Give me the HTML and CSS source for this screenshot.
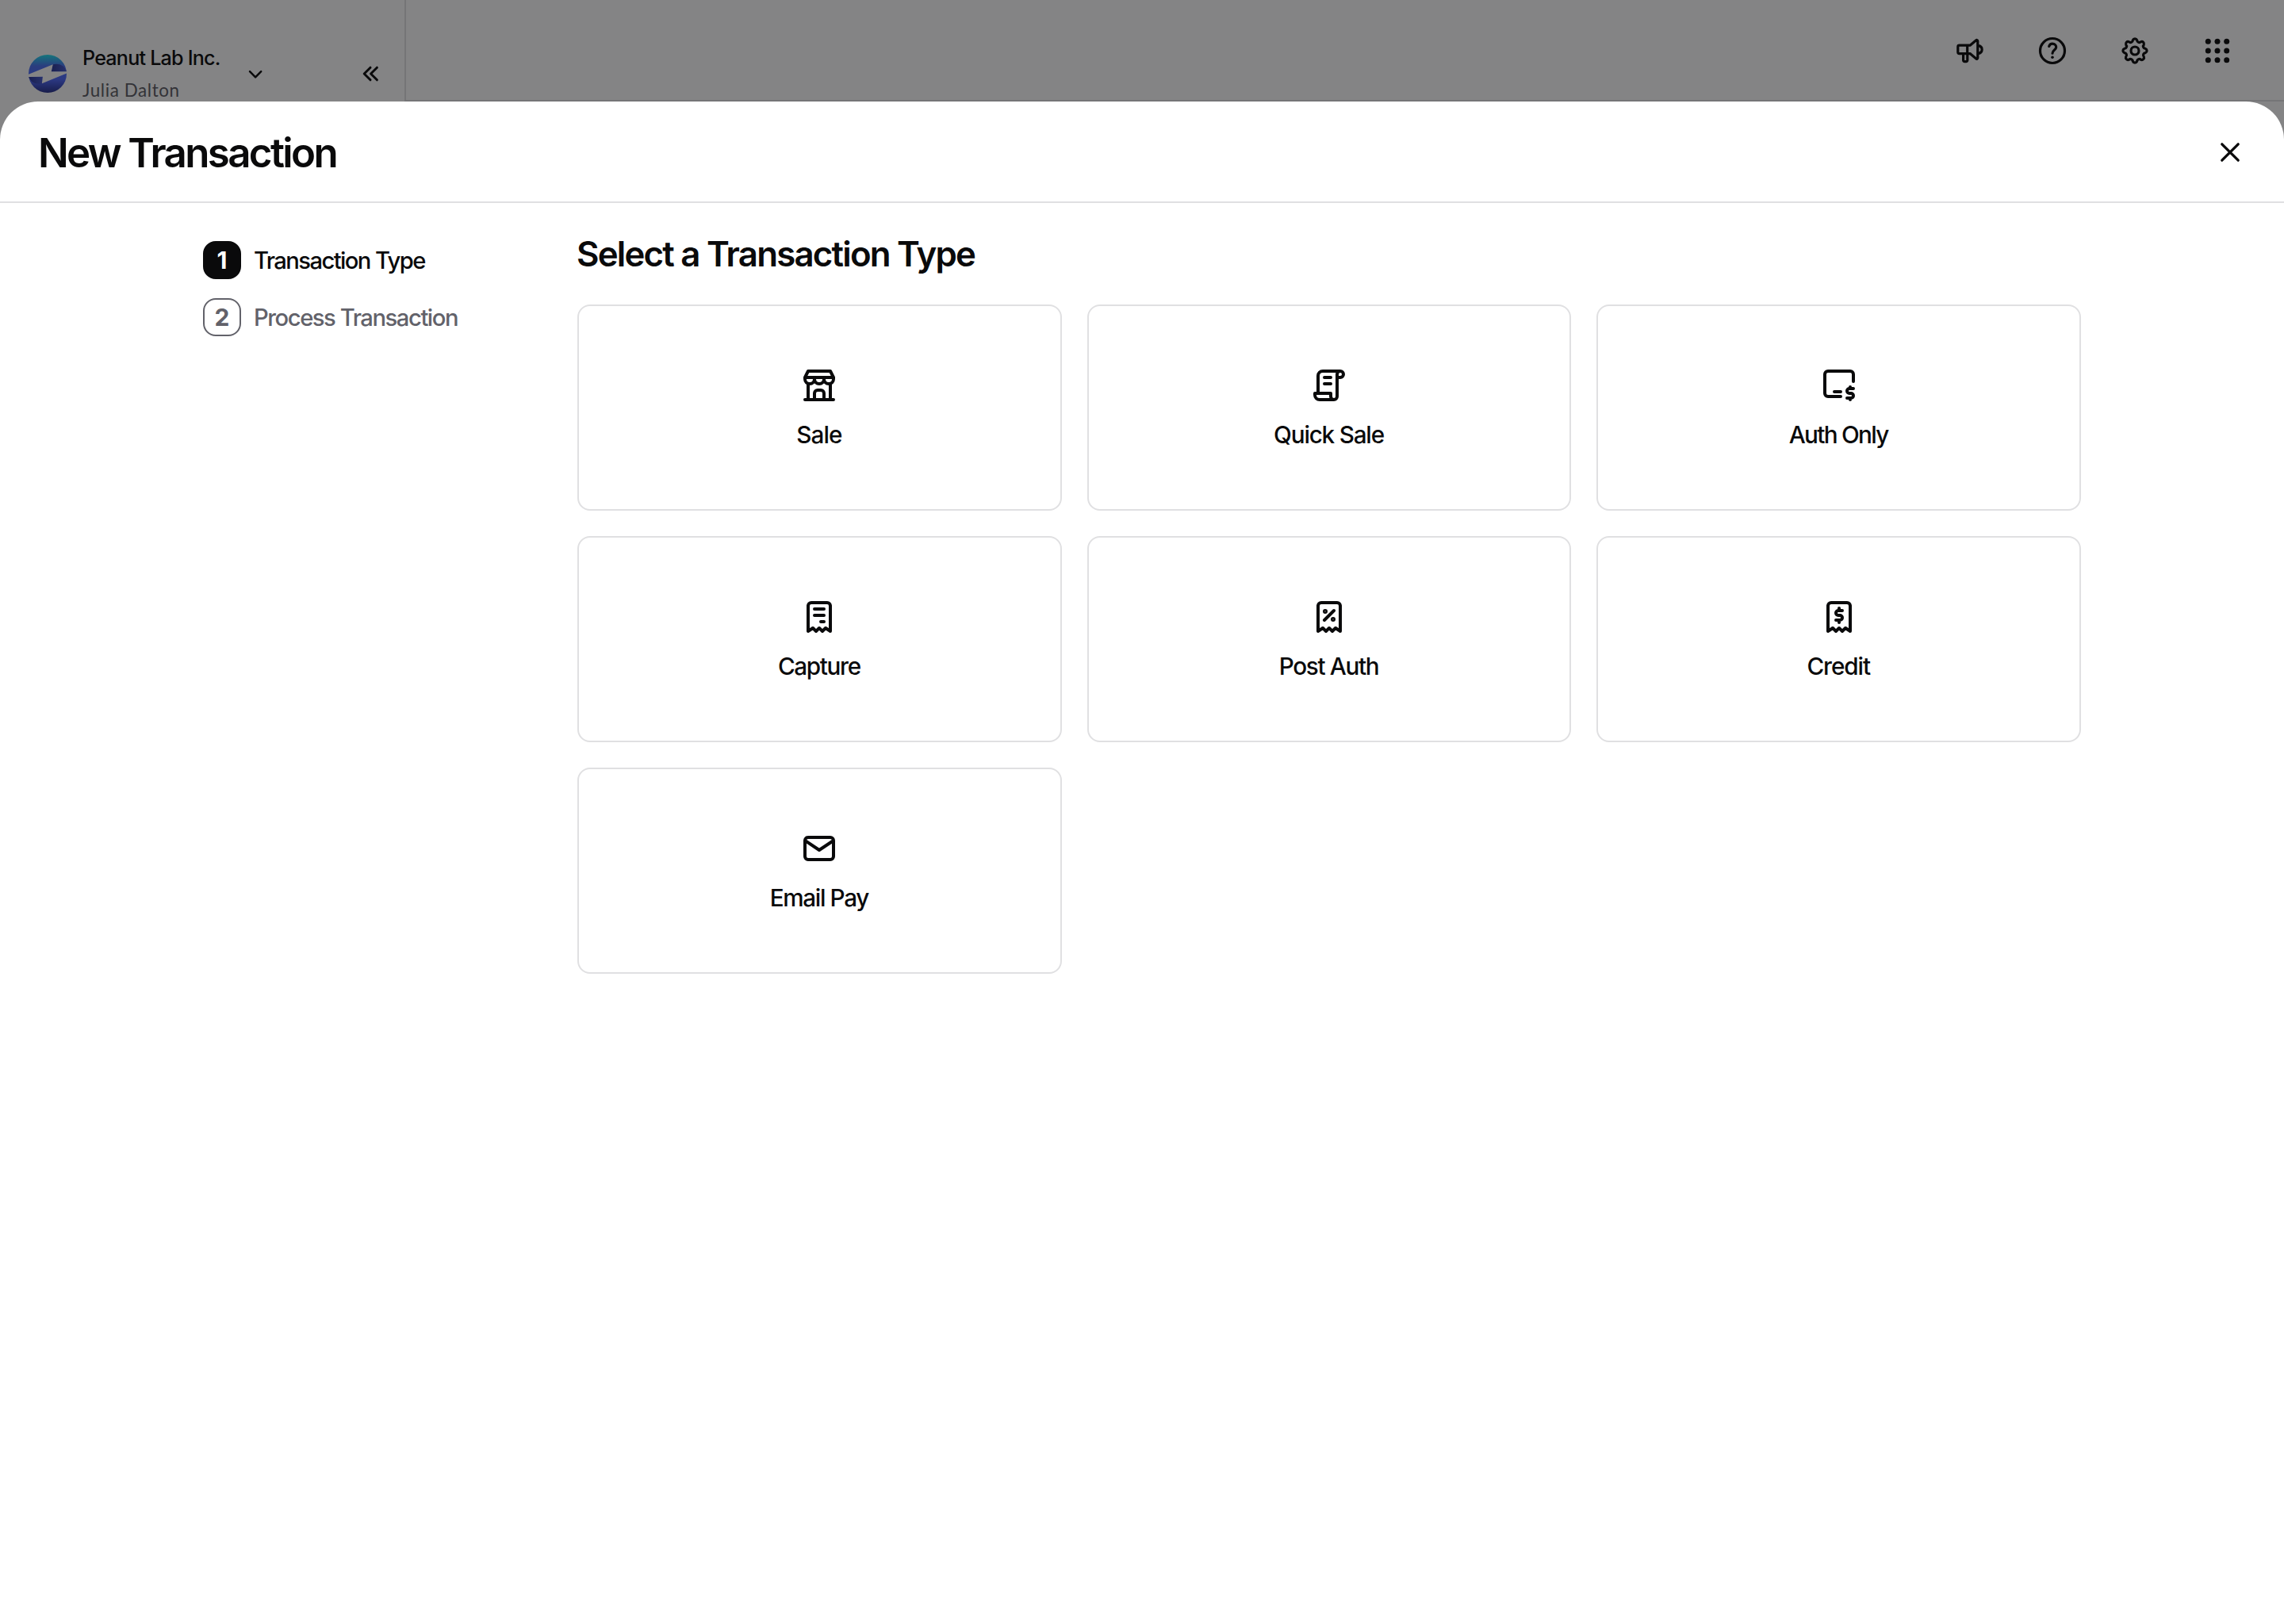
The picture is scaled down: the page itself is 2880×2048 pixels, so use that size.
FILE: index.html
```html
<!DOCTYPE html>
<html lang="en">
<head>
<meta charset="utf-8">
<title>New Transaction</title>
<link rel="stylesheet" href="styles.css">
</head>
<body>
<div class="app">
  <aside class="sidebar">
    <svg class="org-logo" viewBox="0 0 48 48">
      <defs>
        <linearGradient id="orb" x1="0" y1="0" x2="0" y2="1">
          <stop offset="0" stop-color="#1fe0ec"/>
          <stop offset="0.3" stop-color="#4a70f2"/>
          <stop offset="0.65" stop-color="#4e68fa"/>
          <stop offset="1" stop-color="#26308a"/>
        </linearGradient>
        <linearGradient id="fold" x1="0" y1="0" x2="1" y2="0">
          <stop offset="0" stop-color="#2a3796"/>
          <stop offset="1" stop-color="#4558cc"/>
        </linearGradient>
      </defs>
      <circle cx="24" cy="24" r="24" fill="url(#orb)"/>
      <path d="M28.7 21.5L30.7 12.3C38 10.3 46 13.5 47.8 21.3Z" fill="url(#fold)"/>
      <path d="M.3 27.9L17.9 27.7L16.9 36.3C9.5 37.7 2.5 35 .3 27.9Z" fill="url(#fold)"/>
      <path d="M-.5 25L30.7 12.3L28.7 21.3H48.5V23.2L16.9 36.3L17.9 27.7L-.5 28Z" fill="#fff"/>
    </svg>
    <div class="org-text">
      <div class="org-name">Peanut Lab Inc.</div>
      <div class="org-user">Julia Dalton</div>
    </div>
    <svg class="org-chevron" viewBox="0 0 24 24"><path d="M5 8.2L12.1 15.3L19.2 8.2"/></svg>
    <svg class="collapse" viewBox="0 0 32 32"><path d="M15 8.2L7.2 16L15 23.8M23.4 8.2L15.6 16L23.4 23.8"/></svg>
  </aside>
  <header class="topbar">
    <svg class="tool" viewBox="0 0 40 40"><path d="M16.7 13.2H6.6a1.8 1.8 0 0 0-1.8 1.8v6.8a1.8 1.8 0 0 0 1.8 1.8H16.7ZM16.7 13.2h3.4l7.7-6.4a1.2 1.2 0 0 1 2 .9v21.4a1.2 1.2 0 0 1-2 .9l-7.7-6.4h-3.4M11.6 23.8v8.2a1.6 1.6 0 0 0 1.6 1.6h2a1.6 1.6 0 0 0 1.6-1.6v-8.2M30.2 13.4C36.800 14.400 36.800 22.600 30.200 23.600"/></svg>
    <svg class="tool" viewBox="0 0 40 40"><circle cx="20" cy="20" r="15.5"/><path d="M15.7 14.4C16.4 12.3 18 11.2 20 11.2C22.7 11.2 24.7 13 24.7 15.5C24.7 18.8 20 19.2 20 23.2"/><circle class="dot" cx="20" cy="28.3" r="1.8"/></svg>
    <svg class="tool" viewBox="0 0 40 40"><circle cx="20" cy="20" r="5"/><path d="M33.34 22.65A2.9 2.9 0 0 0 31.31 27.56A2.9 2.9 0 0 1 27.56 31.31A2.9 2.9 0 0 0 22.65 33.34A2.9 2.9 0 0 1 17.35 33.34A2.9 2.9 0 0 0 12.44 31.31A2.9 2.9 0 0 1 8.69 27.56A2.9 2.9 0 0 0 6.66 22.65A2.9 2.9 0 0 1 6.66 17.35A2.9 2.9 0 0 0 8.69 12.44A2.9 2.9 0 0 1 12.44 8.69A2.9 2.9 0 0 0 17.35 6.66A2.9 2.9 0 0 1 22.65 6.66A2.9 2.9 0 0 0 27.56 8.69A2.9 2.9 0 0 1 31.31 12.44A2.9 2.9 0 0 0 33.34 17.35A2.9 2.9 0 0 1 33.34 22.65Z"/></svg>
    <svg class="tool tool-grid" viewBox="0 0 40 40"><circle cx="8.3" cy="8.3" r="3.5"/><circle cx="20" cy="8.3" r="3.5"/><circle cx="31.7" cy="8.3" r="3.5"/><circle cx="8.3" cy="20" r="3.5"/><circle cx="20" cy="20" r="3.5"/><circle cx="31.7" cy="20" r="3.5"/><circle cx="8.3" cy="31.7" r="3.5"/><circle cx="20" cy="31.7" r="3.5"/><circle cx="31.7" cy="31.7" r="3.5"/></svg>
  </header>
</div>

<div class="overlay">
  <main class="modal">
    <header class="modal-header">
      <h1 class="modal-title">New Transaction</h1>
      <svg class="close" viewBox="0 0 40 40"><path d="M9.8 9.8L30.2 30.2M30.2 9.8L9.8 30.2"/></svg>
    </header>
    <div class="modal-body">
      <ol class="steps">
        <li class="step step-current"><span class="step-num">1</span><span class="step-label label-type">Transaction Type</span></li>
        <li class="step"><span class="step-num">2</span><span class="step-label">Process Transaction</span></li>
      </ol>
      <section class="picker">
        <h2 class="picker-title">Select a Transaction Type</h2>
        <div class="cards">
          <div class="card">
            <svg class="card-icon" viewBox="0 0 24 24"><path d="M3 21h18M3 7v1a3 3 0 0 0 6 0v-1m0 1a3 3 0 0 0 6 0v-1m0 1a3 3 0 0 0 6 0v-1h-18l2 -4h14l2 4M5 21v-10.15M19 21v-10.15M9 21v-4a2 2 0 0 1 2 -2h2a2 2 0 0 1 2 2v4"/></svg>
            <span class="card-label sale">Sale</span>
          </div>
          <div class="card">
            <svg class="card-icon" viewBox="0 0 24 24"><path d="M15 21h-9a3 3 0 0 1 -3 -3v-1h10v2a2 2 0 0 0 4 0v-14a2 2 0 1 1 2 2h-2m2 -4h-11a3 3 0 0 0 -3 3v11M9 7h4M9 11h4"/></svg>
            <span class="card-label quick">Quick Sale</span>
          </div>
          <div class="card">
            <svg class="card-icon" viewBox="0 0 24 24"><path d="M13 19h-8a2 2 0 0 1 -2 -2v-12a2 2 0 0 1 2 -2h14a2 2 0 0 1 2 2v4.5M9 16h4M21 14h-2.5a1.5 1.5 0 0 0 0 3h1a1.5 1.5 0 0 1 0 3h-2.5M19 20v1m0 -8v1"/></svg>
            <span class="card-label auth">Auth Only</span>
          </div>
          <div class="card">
            <svg class="card-icon" viewBox="0 0 24 24"><path d="M5 21v-16a2 2 0 0 1 2 -2h10a2 2 0 0 1 2 2v16l-3 -2l-2 2l-2 -2l-2 2l-2 -2l-3 2M9 7h6M9 11h6M13 15h2"/></svg>
            <span class="card-label">Capture</span>
          </div>
          <div class="card">
            <svg class="card-icon" viewBox="0 0 24 24"><path d="M5 21v-16a2 2 0 0 1 2 -2h10a2 2 0 0 1 2 2v16l-3 -2l-2 2l-2 -2l-2 2l-2 -2l-3 2M9 14l6 -6"/><circle class="tick" cx="9.5" cy="8.5" r=".5"/><circle class="tick" cx="14.5" cy="13.5" r=".5"/></svg>
            <span class="card-label">Post Auth</span>
          </div>
          <div class="card">
            <svg class="card-icon" viewBox="0 0 24 24"><path d="M5 21v-16a2 2 0 0 1 2 -2h10a2 2 0 0 1 2 2v16l-3 -2l-2 2l-2 -2l-2 2l-2 -2l-3 2M14 8h-2.5a1.5 1.5 0 0 0 0 3h1a1.5 1.5 0 0 1 0 3h-2.5m2 0v1.5m0 -9v1.5"/></svg>
            <span class="card-label credit">Credit</span>
          </div>
          <div class="card">
            <svg class="card-icon" viewBox="0 0 24 24"><path d="M3 7a2 2 0 0 1 2 -2h14a2 2 0 0 1 2 2v10a2 2 0 0 1 -2 2h-14a2 2 0 0 1 -2 -2zM3 7l9 6l9 -6"/></svg>
            <span class="card-label">Email Pay</span>
          </div>
        </div>
      </section>
    </div>
  </main>
</div>
</body>
</html>
```
FILE: styles.css
```css
* { box-sizing: border-box; }
html, body { margin: 0; height: 100%; overflow: hidden; }
body {
  background: #fff;
  color: #0a0a0b;
  font-family: Inter, "Liberation Sans", sans-serif;
}
h1, h2, ol { margin: 0; padding: 0; }
svg { flex: none; display: block; fill: none; stroke: #0a0a0b; stroke-linecap: round; stroke-linejoin: round; }

.app { display: flex; height: 100vh; }
.sidebar {
  width: 512px;
  border-right: 2px solid #e0e0e2;
  padding: 53px 26px 0 36px;
  display: flex;
  align-items: flex-start;
}
.org-logo { width: 48px; height: 48px; margin-top: 16px; stroke: none; }
.org-text { width: 200px; margin-left: 20px; white-space: nowrap; }
.org-name { font-size: 25.1px; line-height: 40px; font-weight: 450; letter-spacing: -0.78px; }
.org-user { padding-top: 1px; font-family: Lato, sans-serif; font-size: 22.4px; line-height: 40px; letter-spacing: 0.6px; color: #5c5c64; }
.org-chevron { width: 24px; height: 24px; margin: 29px 0 0 6px; stroke-width: 2.5; }
.collapse { width: 32px; height: 32px; margin: 24px 0 0 auto; stroke-width: 3; }
.topbar {
  flex: 1;
  height: 128px;
  border-bottom: 2px solid #e0e0e2;
  padding: 44px 64px 0 0;
  display: flex;
  justify-content: flex-end;
  gap: 64px;
}
.tool { width: 40px; height: 40px; stroke-width: 3.2; }
.tool .dot { fill: #0a0a0b; stroke: none; }
.tool-grid { fill: #0a0a0b; stroke: none; }

.overlay {
  position: absolute;
  inset: 0;
  padding-top: 128px;
  background: rgba(10, 10, 11, 0.5);
}
.modal { height: 100%; background: #fff; border-radius: 48px 48px 0 0; }
.modal-header {
  height: 128px;
  border-bottom: 2px solid #e0e0e2;
  padding: 0 48px;
  display: flex;
  align-items: center;
  justify-content: space-between;
}
.modal-title { padding-top: 3px; font-size: 51px; line-height: 64px; font-weight: 620; letter-spacing: -2.63px; }
.close { width: 40px; height: 40px; margin-top: 2px; stroke-width: 3.3; }

.modal-body { display: flex; padding: 37px 256px 0; }
.steps { width: 472px; padding-top: 11px; display: flex; flex-direction: column; gap: 24px; list-style: none; }
.step { display: flex; align-items: center; gap: 16px; color: #62626a; }
.step-num {
  width: 48px;
  height: 48px;
  border: 2px solid #62626a;
  border-radius: 16px;
  font-size: 30px;
  line-height: 45px;
  font-weight: 700;
  text-align: center;
}
.step-label { padding-top: 2px; font-size: 29.2px; line-height: 40px; font-weight: 450; letter-spacing: -1.45px; }
.step-current { color: #0a0a0b; }
.step-current .step-num { background: #0a0a0b; border-color: #0a0a0b; color: #fff; }
.label-type { letter-spacing: -1.6px; }

.picker { flex: 1; }
.picker-title { margin: 0 0 35px -1px; font-size: 43.8px; line-height: 56px; font-weight: 620; letter-spacing: -1.78px; }
.cards { display: grid; grid-template-columns: repeat(3, 1fr); gap: 32px; }
.card {
  height: 260px;
  border: 2px solid #e0e0e2;
  border-radius: 16px;
  padding-top: 76px;
  display: flex;
  flex-direction: column;
  align-items: center;
  gap: 16px;
}
.card-icon { width: 48px; height: 48px; stroke-width: 2; }
.card-icon .tick { fill: #0a0a0b; }
.card-label { padding: 1px 1px 0 0; font-size: 29.7px; line-height: 42px; font-weight: 450; letter-spacing: -1.35px; }
.sale { letter-spacing: -0.9px; }
.quick { letter-spacing: -1.2px; }
.auth { letter-spacing: -1.7px; }
.credit { letter-spacing: -1.1px; }
```
